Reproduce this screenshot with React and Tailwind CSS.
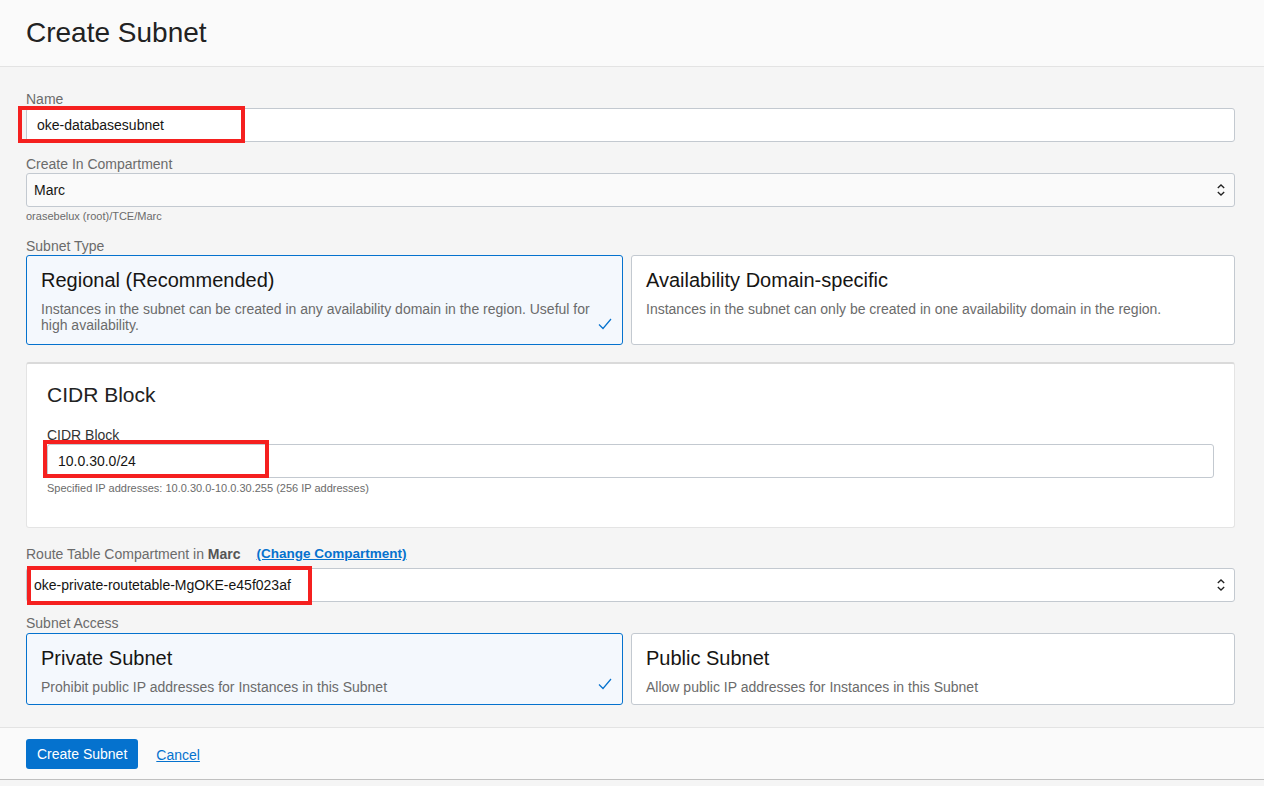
import { useState } from "react";

const font = { fontFamily: '"Liberation Sans", Arial, Helvetica, sans-serif' };

const Label = ({ children, className = "" }) => (
  <div className={"text-[14px] leading-4 text-[#6b6b6b] " + className}>{children}</div>
);

const Callout = ({ className }) => (
  <div className={"pointer-events-none absolute border-[4px] border-[#f5201f] " + className} />
);

const Chevrons = () => (
  <svg width="10" height="14" viewBox="0 0 10 14" className="text-[#222]">
    <path d="M1.8 5 L5 2 L8.2 5" fill="none" stroke="currentColor" strokeWidth="1.3" />
    <path d="M1.8 9 L5 12 L8.2 9" fill="none" stroke="currentColor" strokeWidth="1.3" />
  </svg>
);

const Check = () => (
  <svg width="14" height="12" viewBox="0 0 14 12" className="absolute right-[10px] bottom-[14px]">
    <path d="M1 6.5 L5 10.5 L13 1" fill="none" stroke="#0572ce" strokeWidth="1.2" />
  </svg>
);

const OptionCard = ({ title, desc, selected, className }) => (
  <div
    className={
      "relative rounded-[3px] border px-[14px] pt-[12px] " +
      className +
      (selected ? " border-[#0572ce] bg-[#f4f8fd]" : " border-[#c3c9d0] bg-white")
    }
  >
    <div className="text-[20px] leading-6 text-[#161513]">{title}</div>
    <div className="mt-[9px] text-[14px] leading-4 text-[#6b6b6b]">{desc}</div>
    {selected && <Check />}
  </div>
);

const SelectBox = ({ value, className = "" }) => (
  <div
    className={
      "flex h-[34px] items-center justify-between rounded-[3px] border border-[#c3c9d0] pl-[7px] pr-[8px] text-[14px] text-[#161513] " +
      className
    }
  >
    <span>{value}</span>
    <Chevrons />
  </div>
);

export default function App() {
  const [subnetType] = useState("regional");
  const [access] = useState("private");

  return (
    <div style={font} className="min-h-[786px] w-[1264px] bg-[#f5f5f5] text-[#161513]">
      <header className="flex h-[67px] items-center border-b border-[#e3e3e3] bg-[#fafafa] px-[26px]">
        <h1 className="text-[28px] leading-8 text-[#222]">Create Subnet</h1>
      </header>

      <main className="pl-[26px] pr-[29px] pt-[24px]">
        <Label className="mb-[1px]">Name</Label>
        <div className="relative">
          <div className="flex h-[34px] items-center rounded-[3px] border border-[#c3c9d0] bg-white pl-[10px] text-[14px]">
            oke-databasesubnet
          </div>
          <Callout className="-left-[8px] -top-[2px] h-[37px] w-[227px]" />
        </div>

        <Label className="mt-[14px] mb-[1px]">Create In Compartment</Label>
        <SelectBox value="Marc" className="bg-[#fafafa]" />
        <div className="mt-[3px] text-[11px] leading-[13px] text-[#6b6b6b]">orasebelux (root)/TCE/Marc</div>

        <Label className="mt-[15px] mb-[1px]">Subnet Type</Label>
        <div className="flex gap-[8px]">
          <OptionCard
            className="h-[90px] w-[597px]"
            selected={subnetType === "regional"}
            title="Regional (Recommended)"
            desc="Instances in the subnet can be created in any availability domain in the region. Useful for high availability."
          />
          <OptionCard
            className="h-[90px] flex-1"
            selected={subnetType === "ad"}
            title="Availability Domain-specific"
            desc="Instances in the subnet can only be created in one availability domain in the region."
          />
        </div>

        <section className="mt-[17px] h-[166px] rounded-[3px] border border-[#e4e4e4] border-t-2 border-t-[#dadada] bg-white px-[20px] pt-[17px]">
          <h2 className="text-[21px] leading-7 text-[#222]">CIDR Block</h2>
          <div className="mt-[18px] mb-[1px] text-[14px] leading-4 text-[#333]">CIDR Block</div>
          <div className="relative">
            <div className="flex h-[34px] items-center rounded-[3px] border border-[#c3c9d0] bg-white pl-[10px] text-[14px]">
              10.0.30.0/24
            </div>
            <Callout className="-left-[4px] -top-[4px] h-[38px] w-[226px]" />
          </div>
          <div className="mt-[4px] text-[11px] leading-[13px] text-[#6b6b6b]">
            Specified IP addresses: 10.0.30.0-10.0.30.255 (256 IP addresses)
          </div>
        </section>

        <div className="mt-[18px] mb-[6px] flex items-center gap-[16px]">
          <Label>
            Route Table Compartment in <span className="font-bold text-[#555]">Marc</span>
          </Label>
          <a href="#" className="text-[13.5px] font-bold leading-4 text-[#0572ce] underline">
            (Change Compartment)
          </a>
        </div>
        <div className="relative">
          <SelectBox value="oke-private-routetable-MgOKE-e45f023af" className="bg-white" />
          <Callout className="left-[1px] -top-[2px] h-[39px] w-[285px]" />
        </div>

        <Label className="mt-[13px] mb-[2px]">Subnet Access</Label>
        <div className="flex gap-[8px]">
          <OptionCard
            className="h-[72px] w-[597px]"
            selected={access === "private"}
            title="Private Subnet"
            desc="Prohibit public IP addresses for Instances in this Subnet"
          />
          <OptionCard
            className="h-[72px] flex-1"
            selected={access === "public"}
            title="Public Subnet"
            desc="Allow public IP addresses for Instances in this Subnet"
          />
        </div>
      </main>

      <footer className="mt-[22px] flex h-[53px] items-start gap-[18px] border-b border-t border-b-[#c0c0c0] border-t-[#e3e3e3] bg-[#fafafa] px-[26px] pt-[11px]">
        <button className="h-[30px] rounded-[3px] bg-[#0572ce] px-[11px] text-[14px] text-white">
          Create Subnet
        </button>
        <a href="#" className="mt-[6px] text-[14px] text-[#0572ce] underline">
          Cancel
        </a>
      </footer>
    </div>
  );
}
